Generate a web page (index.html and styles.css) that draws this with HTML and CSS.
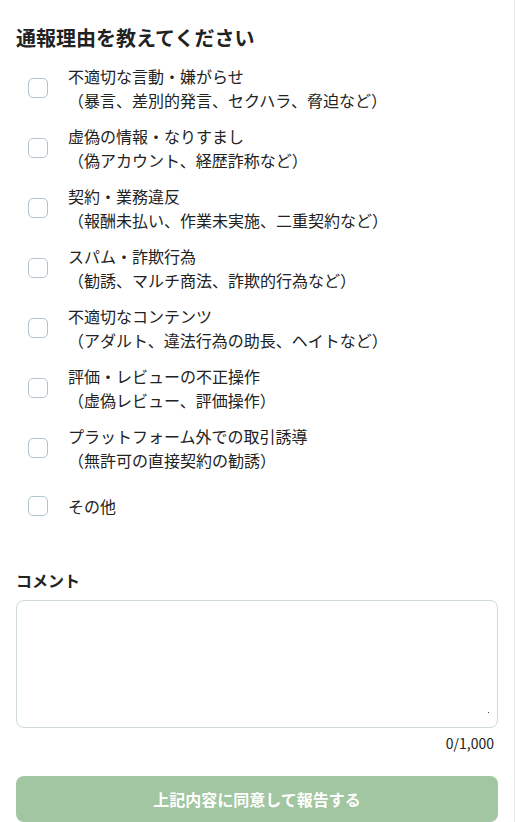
FILE: index.html
```html
<!DOCTYPE html>
<html lang="ja">
<head>
<meta charset="utf-8">
<link rel="stylesheet" href="styles.css">
</head>
<body>
<div class="page">
  <h2 class="title">通報理由を教えてください</h2>
  <ul class="reasons">
    <li class="reason"><span class="box-area"><span class="box"></span></span><span class="label">不適切な言動・嫌がらせ<br>（暴言、差別的発言、セクハラ、脅迫など）</span></li>
    <li class="reason"><span class="box-area"><span class="box"></span></span><span class="label">虚偽の情報・なりすまし<br>（偽アカウント、経歴詐称など）</span></li>
    <li class="reason"><span class="box-area"><span class="box"></span></span><span class="label">契約・業務違反<br>（報酬未払い、作業未実施、二重契約など）</span></li>
    <li class="reason"><span class="box-area"><span class="box"></span></span><span class="label">スパム・詐欺行為<br>（勧誘、マルチ商法、詐欺的行為など）</span></li>
    <li class="reason"><span class="box-area"><span class="box"></span></span><span class="label">不適切なコンテンツ<br>（アダルト、違法行為の助長、ヘイトなど）</span></li>
    <li class="reason"><span class="box-area"><span class="box"></span></span><span class="label">評価・レビューの不正操作<br>（虚偽レビュー、評価操作）</span></li>
    <li class="reason"><span class="box-area"><span class="box"></span></span><span class="label">プラットフォーム外での取引誘導<br>（無許可の直接契約の勧誘）</span></li>
    <li class="reason"><span class="box-area"><span class="box"></span></span><span class="label">その他</span></li>
  </ul>
  <div class="comment">
    <div class="comment-label">コメント</div>
    <div class="textarea"><span class="handle"></span></div>
    <div class="counter">0/1,000</div>
  </div>
  <button class="submit" type="button">上記内容に同意して報告する</button>
</div>
</body>
</html>
```

FILE: styles.css
```css
* { box-sizing: border-box; }
html, body { margin: 0; padding: 0; background: #fff; }
body {
  font-family: "Noto Sans CJK JP", "Noto Sans", sans-serif;
  color: #222;
  overflow: hidden;
}
.page {
  width: 515px;
  height: 822px;
  border-right: 1px solid #e3edea;
  padding: 24px 16px 0 16px;
  display: flex;
  flex-direction: column;
}
.title {
  margin: 0;
  font-size: 20px;
  line-height: 28px;
  font-weight: 700;
  color: #222;
}
.reasons {
  list-style: none;
  margin: 12px 0 0 0;
  padding: 0;
  display: flex;
  flex-direction: column;
  gap: 12px;
}
.reason {
  display: flex;
  align-items: center;
  min-height: 44px;
}
.box-area {
  width: 44px;
  height: 44px;
  flex: none;
  display: flex;
  align-items: center;
  justify-content: center;
}
.box {
  width: 20px;
  height: 20px;
  border: 1.5px solid #b3c4cc;
  border-radius: 5px;
  background: #fff;
}
.label {
  margin-left: 8px;
  font-size: 16px;
  line-height: 24px;
  color: #222;
}
.comment {
  margin-top: 40px;
  display: flex;
  flex-direction: column;
}
.comment-label {
  font-size: 16px;
  line-height: 24px;
  font-weight: 700;
  color: #222;
}
.textarea {
  margin-top: 8px;
  height: 128px;
  border: 1px solid #cfd9de;
  border-radius: 8px;
  position: relative;
}
.handle {
  position: absolute;
  right: 8px;
  bottom: 14px;
  width: 1px;
  height: 1px;
  background: #444;
}
.counter {
  margin-top: 5px;
  align-self: flex-end;
  padding-right: 4px;
  font-size: 14px;
  line-height: 20px;
  color: #222;
}
.submit {
  margin-top: 23px;
  height: 48px;
  width: 100%;
  border: none;
  border-radius: 8px;
  background: #a1c6a1;
  color: #fff;
  font-family: inherit;
  font-size: 16px;
  font-weight: 700;
  line-height: 24px;
  padding: 0;
}
```
